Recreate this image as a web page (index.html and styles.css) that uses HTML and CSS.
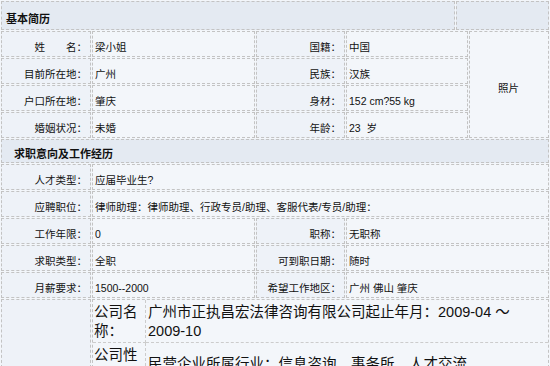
FILE: index.html
```html
<!DOCTYPE html>
<html lang="zh-CN">
<head>
<meta charset="utf-8">
<title>个人简历</title>
<link rel="stylesheet" href="styles.css">
</head>
<body>
<table class="resume">
  <colgroup>
    <col class="c1"><col class="c2"><col class="c3"><col class="c4"><col class="c5"><col class="c6">
  </colgroup>
  <tr>
    <td colspan="4" class="title">基本简历</td>
    <td colspan="2" class="title"></td>
  </tr>
  <tr>
    <td class="lb">姓　　名：</td><td class="val">梁小姐</td>
    <td class="lb">国籍：</td><td colspan="2" class="val">中国</td>
    <td rowspan="4" class="photo">照片</td>
  </tr>
  <tr>
    <td class="lb">目前所在地：</td><td class="val">广州</td>
    <td class="lb">民族：</td><td colspan="2" class="val">汉族</td>
  </tr>
  <tr>
    <td class="lb">户口所在地：</td><td class="val">肇庆</td>
    <td class="lb">身材：</td><td colspan="2" class="val">152 cm?55 kg</td>
  </tr>
  <tr>
    <td class="lb">婚姻状况：</td><td class="val">未婚</td>
    <td class="lb">年龄：</td><td colspan="2" class="val">23&nbsp; 岁</td>
  </tr>
  <tr>
    <td colspan="6" class="title title2">求职意向及工作经历</td>
  </tr>
  <tr>
    <td class="lb">人才类型：</td><td colspan="5" class="val">应届毕业生?</td>
  </tr>
  <tr>
    <td class="lb">应聘职位：</td><td colspan="5" class="val">律师助理：律师助理、行政专员/助理、客服代表/专员/助理：</td>
  </tr>
  <tr>
    <td class="lb">工作年限：</td><td class="val">0</td>
    <td class="lb">职称：</td><td colspan="3" class="val">无职称</td>
  </tr>
  <tr>
    <td class="lb">求职类型：</td><td class="val">全职</td>
    <td class="lb">可到职日期：</td><td colspan="3" class="val">随时</td>
  </tr>
  <tr>
    <td class="lb">月薪要求：</td><td class="val">1500--2000</td>
    <td class="lb">希望工作地区：</td><td colspan="3" class="val">广州 佛山 肇庆</td>
  </tr>
  <tr>
    <td class="lb"></td>
    <td colspan="5" class="nest">
      <table class="work">
        <tr>
          <td class="wl">公司名称：</td>
          <td class="wv">广州市正执昌宏法律咨询有限公司起止年月：2009-04 ～ 2009-10</td>
        </tr>
        <tr>
          <td class="wl">公司性质：</td>
          <td class="wv">民营企业所属行业：信息咨询，事务所，人才交流</td>
        </tr>
        <tr>
          <td class="wl">担任职位：</td>
          <td class="wv">律师助理</td>
        </tr>
      </table>
    </td>
  </tr>
</table>
</body>
</html>
```
FILE: styles.css
```css
html, body {
  margin: 0;
  padding: 0;
  overflow: hidden;
  background: #ffffff;
}

body {
  font-family: "Liberation Sans", "Noto Sans CJK SC", sans-serif;
  font-size: 10.5px;
  line-height: 14px;
  color: #111111;
}

.resume {
  width: 550px;
  table-layout: fixed;
  border-collapse: separate;
  border-spacing: 1px;
  background: #f3f6fa;
}

.c1 { width: 90px; }
.c2 { width: 163px; }
.c3 { width: 89px; }
.c4 { width: 109px; }
.c5 { width: 12px; }
.c6 { width: 80px; }

.resume td {
  border: 1px dashed #c3c3c3;
  padding: 8px 3px 2px 2px;
  background: #f3f6fa;
  vertical-align: middle;
}

.resume td.lb {
  text-align: right;
  background: #eef2f8;
  padding-right: 3px;
}

.resume td.title {
  background: #e4eaf2;
  font-weight: bold;
  font-size: 11px;
  padding: 10px 4px 3px;
}

.resume td.title2 {
  padding: 7px 12px 1px;
}

.resume td.photo {
  text-align: center;
}

.resume td.nest {
  padding: 0;
}

.work {
  width: 100%;
  border-collapse: collapse;
  border-style: hidden;
  font-size: 14.5px;
  line-height: 18.5px;
}

.work td {
  border: 1px dashed #cccccc;
  padding: 3px 1px 2px;
  vertical-align: middle;
}

.work td.wl {
  width: 50px;
}

.work td.wv {
  padding-left: 2px;
}
```
